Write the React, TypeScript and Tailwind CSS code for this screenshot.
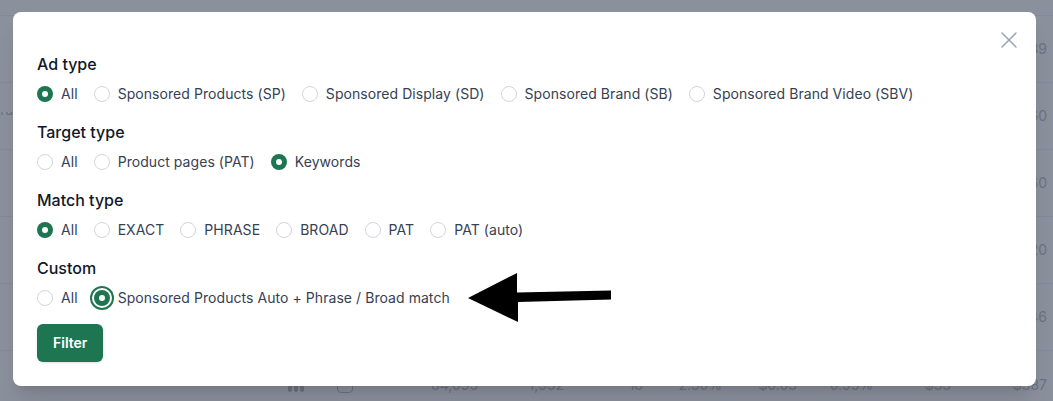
import React from 'react'
import { X } from 'lucide-react'

type Group = {
  label: string
  options: string[]
  selected: number
  focused?: boolean
}

const groups: Group[] = [
  {
    label: 'Ad type',
    options: [
      'All',
      'Sponsored Products (SP)',
      'Sponsored Display (SD)',
      'Sponsored Brand (SB)',
      'Sponsored Brand Video (SBV)',
    ],
    selected: 0,
  },
  { label: 'Target type', options: ['All', 'Product pages (PAT)', 'Keywords'], selected: 2 },
  {
    label: 'Match type',
    options: ['All', 'EXACT', 'PHRASE', 'BROAD', 'PAT', 'PAT (auto)'],
    selected: 0,
  },
  {
    label: 'Custom',
    options: ['All', 'Sponsored Products Auto + Phrase / Broad match'],
    selected: 1,
    focused: true,
  },
]

function Radio({ checked, focused }: { checked: boolean; focused?: boolean }) {
  if (!checked) {
    return <span className="block h-4 w-4 shrink-0 rounded-full border border-gray-300 bg-white" />
  }
  return (
    <span
      className={
        focused
          ? 'flex h-4 w-4 shrink-0 items-center justify-center rounded-full bg-[#1e7552] ring-2 ring-[#1e7552] ring-offset-2'
          : 'flex h-4 w-4 shrink-0 items-center justify-center rounded-full bg-[#1e7552]'
      }
    >
      <span className="block h-1.5 w-1.5 rounded-full bg-white" />
    </span>
  )
}

const rightValues = ['39', '60', '60', '20', '46']

// bottom table row that peeks out under the dialog
const bottomCells = [
  { w: 'w-[478px]', text: '84,095' },
  { w: 'w-[86px]', text: '1,932' },
  { w: 'w-[79px]', text: '18' },
  { w: 'w-[79px]', text: '2.30%' },
  { w: 'w-[75px]', text: '$0.03' },
  { w: 'w-[76px]', text: '0.95%' },
  { w: 'w-[78px]', text: '$33' },
  { w: 'w-[96px]', text: '$387' },
]

export default function App() {
  return (
    <div className="relative h-[401px] w-[1053px] overflow-hidden bg-[#8b909d] font-['Inter','Liberation_Sans',sans-serif] text-sm text-[#6d7281]">
      {/* dimmed table behind the dialog */}
      <div className="h-4 border-b border-[#858a98]" />
      {rightValues.map((v, i) => (
        <div key={i} className="flex h-[67px] items-center border-b border-[#858a98]">
          <div className="w-[13px] overflow-hidden">
            {i === 1 && <span className="mt-[-12px] ml-[-8px] block whitespace-nowrap">era</span>}
          </div>
          <div className="flex-1 pr-[6px] text-right">{v}</div>
        </div>
      ))}
      <div className="relative flex h-[67px] items-center">
        <div className="absolute left-[288px] top-[27px] flex gap-[2px]">
          <span className="block h-[14px] w-[4px] rounded-sm bg-[#6d7281]" />
          <span className="block h-[14px] w-[4px] rounded-sm bg-[#6d7281]" />
          <span className="block h-[14px] w-[4px] rounded-sm bg-[#6d7281]" />
        </div>
        <div className="absolute left-[337px] top-[26px] h-[16px] w-[16px] rounded-sm border border-[#6d7281]" />
        {bottomCells.map(c => (
          <div key={c.text} className={`${c.w} text-right`}>
            {c.text}
          </div>
        ))}
      </div>

      {/* dialog */}
      <div className="absolute left-[13px] top-[12px] h-[374px] w-[1023px] rounded-lg bg-white px-6 pt-10 shadow-xl">
        <button className="absolute right-[13px] top-[14px] text-gray-400">
          <X size={28} strokeWidth={1.25} />
        </button>

        {groups.map(g => (
          <div key={g.label} className="mb-4">
            <div className="text-base leading-6 font-medium text-gray-900">{g.label}</div>
            <div className="mt-2 flex h-5 items-center gap-4">
              {g.options.map((o, i) => (
                <label
                  key={o}
                  className="flex items-center gap-2 text-sm leading-5 tracking-[0.06px] text-gray-700"
                >
                  <Radio checked={i === g.selected} focused={g.focused} />
                  <span>{o}</span>
                </label>
              ))}
            </div>
          </div>
        ))}

        <button className="rounded-md bg-[#1e7552] px-4 py-[9px] text-sm leading-5 font-semibold text-white shadow-sm">
          Filter
        </button>
      </div>

      {/* annotation arrow */}
      <svg className="absolute left-0 top-0" width="1053" height="401" viewBox="0 0 1053 401">
        <polygon
          points="468,298 517,273 517,292.5 611,290.5 611,299.5 518,302 518,322"
          fill="#000"
        />
      </svg>
    </div>
  )
}
